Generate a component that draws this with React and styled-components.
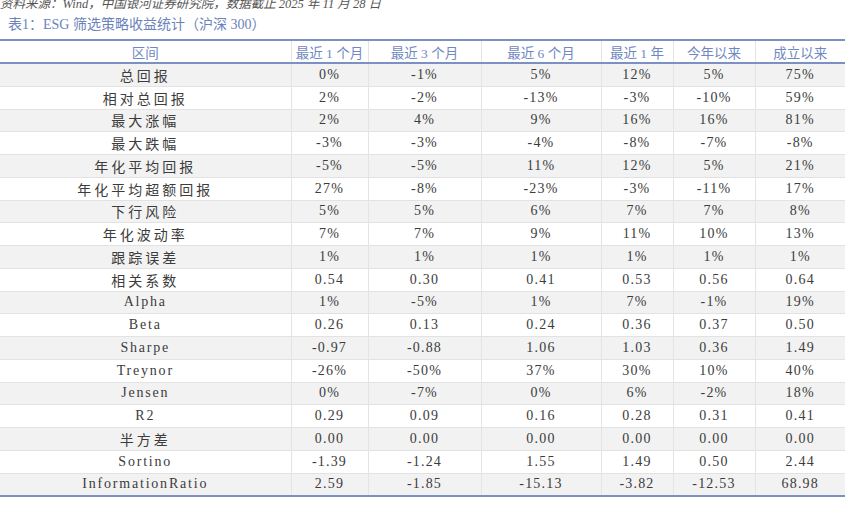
import React from 'react';
import styled, { createGlobalStyle } from 'styled-components';

const Global = createGlobalStyle`
  html, body { margin: 0; padding: 0; background: #fff; }
  body { font-family: "Liberation Serif", "Noto Sans CJK SC", serif; overflow: hidden; }
`;

const Page = styled.div`
  width: 848px;
  height: 531px;
  overflow: hidden;
`;

const Source = styled.div`
  margin-top: -7px;
  padding-left: 0;
  height: 18px;
  font-size: 12.5px;
  font-style: italic;
  color: #555;
  white-space: nowrap;
`;

const Caption = styled.div`
  margin-top: 4px;
  padding-left: 8px;
  height: 20px;
  line-height: 20px;
  font-size: 14px;
  color: #6b83ba;
  white-space: nowrap;
`;

const Table = styled.table`
  margin-top: 4px;
  width: 845px;
  border-collapse: collapse;
  table-layout: fixed;
  border-top: 2px solid #7c90c2;
  border-bottom: 2px solid #7c90c2;
  font-size: 14px;
`;

const Th = styled.th`
  height: 21px;
  padding: 0;
  font-weight: normal;
  font-size: 13.5px;
  color: #7088c0;
  text-align: center;
  border-bottom: 2px solid #7c90c2;
  border-left: 1px solid #e4e4e4;
  white-space: nowrap;
  &:first-child { border-left: none; }
`;

const Row = styled.tr`
  background: ${p => (p.$shade ? '#f2f2f2' : '#fff')};
  border-top: 1px solid #e2e2e2;
  &:first-child { border-top: none; }
`;

const Td = styled.td`
  height: 21.75px;
  padding: 0;
  text-align: center;
  color: #3c3c3c;
  letter-spacing: ${p => (p.$cjk ? '3px' : p.$label ? '1.8px' : '1.2px')};
  border-left: 1px solid #e4e4e4;
  white-space: nowrap;
  &:first-child { border-left: none; }
`;

const widths = [291, 77, 113, 120, 72, 82, 90];
const heads = ['区间', '最近 1 个月', '最近 3 个月', '最近 6 个月', '最近 1 年', '今年以来', '成立以来'];

const rows = [
  ['总回报', '0%', '-1%', '5%', '12%', '5%', '75%'],
  ['相对总回报', '2%', '-2%', '-13%', '-3%', '-10%', '59%'],
  ['最大涨幅', '2%', '4%', '9%', '16%', '16%', '81%'],
  ['最大跌幅', '-3%', '-3%', '-4%', '-8%', '-7%', '-8%'],
  ['年化平均回报', '-5%', '-5%', '11%', '12%', '5%', '21%'],
  ['年化平均超额回报', '27%', '-8%', '-23%', '-3%', '-11%', '17%'],
  ['下行风险', '5%', '5%', '6%', '7%', '7%', '8%'],
  ['年化波动率', '7%', '7%', '9%', '11%', '10%', '13%'],
  ['跟踪误差', '1%', '1%', '1%', '1%', '1%', '1%'],
  ['相关系数', '0.54', '0.30', '0.41', '0.53', '0.56', '0.64'],
  ['Alpha', '1%', '-5%', '1%', '7%', '-1%', '19%'],
  ['Beta', '0.26', '0.13', '0.24', '0.36', '0.37', '0.50'],
  ['Sharpe', '-0.97', '-0.88', '1.06', '1.03', '0.36', '1.49'],
  ['Treynor', '-26%', '-50%', '37%', '30%', '10%', '40%'],
  ['Jensen', '0%', '-7%', '0%', '6%', '-2%', '18%'],
  ['R2', '0.29', '0.09', '0.16', '0.28', '0.31', '0.41'],
  ['半方差', '0.00', '0.00', '0.00', '0.00', '0.00', '0.00'],
  ['Sortino', '-1.39', '-1.24', '1.55', '1.49', '0.50', '2.44'],
  ['InformationRatio', '2.59', '-1.85', '-15.13', '-3.82', '-12.53', '68.98'],
];

const isCjk = s => /[\u4e00-\u9fff]/.test(s);

export default function App() {
  return (
    <Page>
      <Global />
      <Source>资料来源：Wind，中国银河证券研究院，数据截止 2025 年 11 月 28 日</Source>
      <Caption>表1：ESG 筛选策略收益统计（沪深 300）</Caption>
      <Table>
        <colgroup>
          {widths.map((w, i) => <col key={i} style={{ width: w }} />)}
        </colgroup>
        <thead>
          <tr>
            {heads.map(h => <Th key={h}>{h}</Th>)}
          </tr>
        </thead>
        <tbody>
          {rows.map((r, i) => (
            <Row key={r[0]} $shade={i % 2 === 0}>
              {r.map((c, j) => (
                <Td key={j} $label={j === 0} $cjk={j === 0 && isCjk(c)}>{c}</Td>
              ))}
            </Row>
          ))}
        </tbody>
      </Table>
    </Page>
  );
}
